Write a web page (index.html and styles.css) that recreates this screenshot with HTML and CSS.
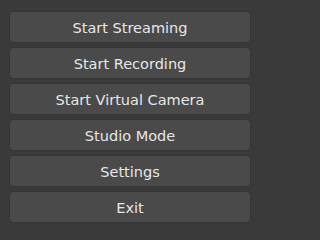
FILE: index.html
```html
<!DOCTYPE html>
<html>
<head>
<meta charset="utf-8">
<link rel="stylesheet" href="styles.css">
</head>
<body>
<div class="controls">
  <button class="btn">Start Streaming</button>
  <button class="btn">Start Recording</button>
  <button class="btn">Start Virtual Camera</button>
  <button class="btn">Studio Mode</button>
  <button class="btn">Settings</button>
  <button class="btn">Exit</button>
</div>
</body>
</html>
```
FILE: styles.css
```css
html, body {
  margin: 0;
  padding: 0;
  background: #3a3a3a;
}
.controls {
  width: 258px;
  height: 229px;
  box-sizing: border-box;
  display: flex;
  flex-direction: column;
  gap: 4px;
  padding: 11px 7px 0 9px;
}
.btn {
  height: 32px;
  flex: none;
  margin: 0;
  padding: 2px 0 0 0;
  border: 1px solid #353535;
  border-radius: 4px;
  background: #4a4a4a;
  color: #e6e6e6;
  font-family: "DejaVu Sans", sans-serif;
  font-size: 14.5px;
  text-align: center;
  box-sizing: border-box;
}
```
